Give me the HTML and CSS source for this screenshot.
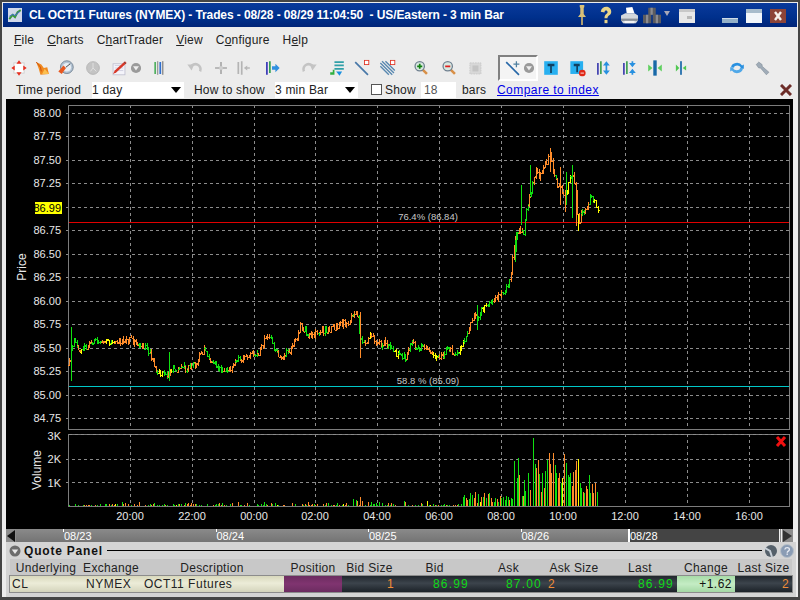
FILE: index.html
```html
<!DOCTYPE html>
<html lang="en">
<head>
<meta charset="utf-8">
<title>CL OCT11 Futures</title>
<link rel="stylesheet" href="styles.css">
</head>
<body>
<div class="window">
  <header class="titlebar">
    <svg class="app-icon" width="14" height="14" viewBox="0 0 22 20" preserveAspectRatio="none"><rect x="0" y="0" width="22" height="20" fill="#d0d8ea"/><path d="M2 16l5-6 4 3 4-7 5-3" fill="none" stroke="#3a9a3a" stroke-width="3"/><path d="M2 12l6-3 3 2 7-6" fill="none" stroke="#4070c0" stroke-width="1.500"/></svg>
    <span class="title-text">CL OCT11 Futures (NYMEX) - Trades - 08/28 - 08/29 11:04:50&nbsp; - US/Eastern - 3 min Bar</span>
    <div class="title-tools">
      <svg class="t-pin" width="8" height="22" viewBox="0 0 14 22" preserveAspectRatio="none"><path d="M3 1h8v2l-1 1v6l4 3H0l4-3V4L3 3z" fill="#d8c078"/><rect x="5.500" y="13" width="3" height="8" fill="#c8b070"/></svg>
      <svg class="t-help" width="12" height="18" viewBox="0 0 16 22" preserveAspectRatio="none"><path d="M1 7c1-8 14-8 14 0 0 5-5 4-5 8H6c0-6 5-5 4-8-.5-2-4-2-4 1z" fill="#e8d488"/><rect x="6" y="17" width="4" height="4" fill="#e8d488"/></svg>
      <svg class="t-print" width="17" height="17" viewBox="0 0 24 22" preserveAspectRatio="none"><path d="M7 1l9-1 3 8H8z" fill="#fff"/><path d="M0 11l6-3h13l5 3v6l-3 4H3l-3-4z" fill="#d4d8dc"/><rect x="0" y="15" width="24" height="3" fill="#8a9098"/><rect x="5" y="18" width="14" height="3" fill="#f4f4f4"/></svg>
      <svg class="t-cube" width="18" height="17" viewBox="0 0 24 22" preserveAspectRatio="none"><path d="M7 1h10v9H7zM0 10h11v11H0zM13 10h11v11H13z" fill="#5c5c60"/><path d="M10 1h3v9h-3zM4 10h3v11H4zM17 10h3v11h-3z" fill="#8c8c90"/></svg>
      <svg class="t-arrow" width="8" height="22" viewBox="0 0 8 22"><path d="M1 7h6l-3 5z" fill="#a8a8b8"/></svg>
      <svg class="t-win" width="16" height="22" viewBox="0 0 16 22"><rect y="5" width="16" height="14" fill="#e8e8e8"/><rect y="5" width="16" height="3" fill="#c8c8c8"/><rect x="8" y="12" width="5" height="3" fill="#b8b8b8"/></svg>
      <svg class="t-min" width="17" height="22" viewBox="0 0 17 22"><rect y="14" width="16" height="5" fill="#94b0c8"/><rect y="14" width="16" height="1" fill="#d0dce8"/></svg>
      <svg class="t-max" width="17" height="22" viewBox="0 0 17 22"><rect y="5" width="16" height="14" fill="#f2f6fa"/><rect y="5" width="16" height="4" fill="#a8bccc"/></svg>
      <svg class="t-close" width="17" height="22" viewBox="0 0 17 22"><rect y="5" width="16" height="14" fill="#8c4438"/><path d="M5 8l6 8M11 8l-6 8" stroke="#f4f0ec" stroke-width="2.400"/></svg>
    </div>
  </header>

  <nav class="menubar">
    <span class="menu-item"><u>F</u>ile</span>
    <span class="menu-item"><u>C</u>harts</span>
    <span class="menu-item">C<u>h</u>artTrader</span>
    <span class="menu-item"><u>V</u>iew</span>
    <span class="menu-item">C<u>o</u>nfigure</span>
    <span class="menu-item">H<u>e</u>lp</span>
  </nav>

  <div class="toolbar">
    <svg class="ic" viewBox="0 0 20 20"><rect x="4" y="4" width="12" height="12" fill="#fff" stroke="#ccc"/><path d="M10 1l3 4H7zM10 19l-3-4h6zM1 10l4-3v6zM19 10l-4 3V7z" fill="#e83020"/></svg>
    <svg class="ic g4" viewBox="0 0 20 20"><path d="M2 3l6 3 3 4 4-1 2 8-10 1-2-7z" fill="#f08a20"/><path d="M2 3l5 6 1 5" stroke="#c84808" fill="none"/><path d="M12 11l5 6H9z" fill="#fbc050"/></svg>
    <svg class="ic g3" viewBox="0 0 20 20"><circle cx="11" cy="9" r="7.500" fill="#b4c4d4" stroke="#6c7c8c"/><circle cx="11" cy="9" r="5" fill="#e8eef4"/><path d="M1 14l6-7 3 3-5 7z" fill="#e85820"/><path d="M10 9l5-4" stroke="#333"/></svg>
    <svg class="ic g7" viewBox="0 0 20 20"><circle cx="10" cy="10" r="7.500" fill="#c4c4c4" stroke="#b4b4b4"/><path d="M10 4v6l4 4M10 10l-3 4" stroke="#e4e4e4" fill="none"/></svg>
    <svg class="ic g6" viewBox="0 0 20 20"><rect x="3" y="5" width="14" height="13" fill="#f4f4fa" stroke="#c0c0d0"/><path d="M5 7h10M5 10h10M5 13h10" stroke="#ccd" /><path d="M17 2l2 2L7 15l-4 2 2-4z" fill="#d83828"/><path d="M16 3l2 2" stroke="#505050"/></svg>
    <svg class="dd g1" viewBox="0 0 12 20"><circle cx="6" cy="10" r="6" fill="#9a9a9a"/><path d="M2.500 8h7L6 13z" fill="#eee"/></svg>
    <svg class="ic g7" viewBox="0 0 20 20"><path d="M5.500 3v14" stroke="#50b060" stroke-width="2"/><path d="M8.500 2v16" stroke="#707070"/><path d="M11.500 3v14" stroke="#3070d0" stroke-width="2"/><path d="M14.500 2v16" stroke="#505050"/></svg>
    <svg class="ic g16" viewBox="0 0 20 20"><path d="M16 14A6 6 0 0 0 5 9" fill="none" stroke="#c4c4c4" stroke-width="3"/><path d="M1 6l8 0-3 7z" fill="#c4c4c4"/></svg>
    <svg class="ic g6" viewBox="0 0 20 20"><path d="M10 3v14M3 10h14" stroke="#a8a8a8" stroke-width="2"/><path d="M8 8h4v4H8z" fill="#d0d0d0"/></svg>
    <svg class="ic g2" viewBox="0 0 20 20"><path d="M4.500 3v14M8.500 2v16" stroke="#b4b4b4" stroke-width="2"/><path d="M11 10l4-3v2h3v2h-3v2z" fill="#b8b8b8"/></svg>
    <svg class="ic g9" viewBox="0 0 20 20"><path d="M4 3v15" stroke="#3838b8" stroke-width="2"/><path d="M7.500 2v14" stroke="#30a050" stroke-width="2"/><path d="M10 8h4V5l5 5-5 5v-3h-4z" fill="#3090e0"/></svg>
    <svg class="ic g17" viewBox="0 0 20 20"><path d="M4 14A6 6 0 0 1 15 9" fill="none" stroke="#c4c4c4" stroke-width="3"/><path d="M19 6l-8 0 3 7z" fill="#c4c4c4"/></svg>
    <svg class="ic g8" viewBox="0 0 20 20"><path d="M7 2h11v2H7zM7 6h11v2H7zM7 10h11v2H7z" fill="#30a0a8"/><path d="M2 18v-3h3v-3h2v6z" fill="#30b040"/><path d="M9 14h7l-3 5z" fill="#1890e0"/></svg>
    <svg class="ic g5" viewBox="0 0 20 20"><path d="M2 3l15 15" stroke="#4878a8" stroke-width="2"/><rect x="13" y="1" width="5" height="5" fill="#fff" stroke="#e03020"/></svg>
    <svg class="ic g6" viewBox="0 0 20 20"><path d="M1 4l14 14M3 2l14 14M1 8l10 10M7 2l11 11" stroke="#5888b0" stroke-width="1.600"/><rect x="13" y="1" width="5" height="5" fill="#fff" stroke="#e03020"/></svg>
    <svg class="ic g13" viewBox="0 0 20 20"><use href="#lens"/><path d="M5.500 8h6M8.500 5v6" stroke="#108010" stroke-width="2"/></svg>
    <svg class="ic g8" viewBox="0 0 20 20"><use href="#lens"/><path d="M5.500 8h6" stroke="#e02020" stroke-width="2"/></svg>
    <svg class="ic g6" viewBox="0 0 20 20"><rect x="4" y="4" width="13" height="13" fill="#d8d8d8" stroke="#c8c8c8" stroke-dasharray="2 1"/><rect x="7" y="7" width="7" height="7" fill="#c4c4c4"/></svg>
    <div class="tool-box g13">
      <svg class="ic" viewBox="0 0 20 20"><path d="M2 3l15 15" stroke="#2868a8" stroke-width="2"/><path d="M14 2v7M10.500 5.500h7" stroke="#5080a0" stroke-width="1.500"/></svg>
      <svg class="dd" viewBox="0 0 12 20"><circle cx="6" cy="10" r="6" fill="#9a9a9a"/><path d="M2.500 8h7L6 13z" fill="#eee"/></svg>
    </div>
    <svg class="ic g3" viewBox="0 0 20 20"><rect x="2" y="2" width="16" height="16" fill="#28b0f0"/><path d="M6 5h8v3h-3v8H9V8H6z" fill="#104060"/></svg>
    <svg class="ic g7" viewBox="0 0 20 20"><rect x="1" y="2" width="15" height="15" fill="#28b0f0"/><path d="M5 5h7v3h-2v7H8V8H5z" fill="#104060"/><circle cx="15" cy="16" r="4" fill="#e02818"/><path d="M13 16h4" stroke="#fff"/></svg>
    <svg class="ic g5" viewBox="0 0 20 20"><path d="M4 4v14" stroke="#4040b0" stroke-width="2"/><path d="M7.500 2v15" stroke="#40a050" stroke-width="2"/><path d="M14 2l4 5h-3v6h3l-4 5-4-5h3V7h-3z" fill="#2890e0"/></svg>
    <svg class="ic g6" viewBox="0 0 20 20"><path d="M4 4v14" stroke="#4040b0" stroke-width="2"/><path d="M7.500 2v15" stroke="#40a050" stroke-width="2"/><path d="M14 9l-4-5h3V2h2v2h3zM14 11l4 5h-3v2h-2v-2h-3z" fill="#2890e0"/></svg>
    <svg class="ic g6" viewBox="0 0 20 20"><rect x="8" y="1" width="4" height="18" fill="#1868a8"/><path d="M7 10l-5-4v8z" fill="#60d060"/><path d="M13 10l5-4v8z" fill="#60d060"/></svg>
    <svg class="ic g6" viewBox="0 0 20 20"><rect x="9" y="2" width="2" height="16" fill="#1868a8"/><path d="M8 10L4 6v8z" fill="#50c850"/><path d="M12 10l4-3v6z" fill="#50c850"/></svg>
    <svg class="ic g36" viewBox="0 0 20 20"><path d="M3 9a7 6 0 0 1 13-2l2-1v5h-5l1.500-2A5 4 0 0 0 6 9z" fill="#2890e0"/><path d="M17 11a7 6 0 0 1-13 2l-2 1v-5h5l-1.500 2a5 4 0 0 0 8.500-.5z" fill="#50a8e8"/></svg>
    <svg class="ic g6" viewBox="0 0 20 20"><path d="M2 6l3-3 4 3 0 2 8 7-3 3-7-8-2 0z" fill="#a0acb8" stroke="#788490" stroke-width=".6"/></svg>
  </div>

  <div class="options">
    <span class="opt-label lbl-time">Time period</span>
    <div class="combo combo-a"><span>1 day</span><i class="caret"></i></div>
    <span class="opt-label lbl-how">How to show</span>
    <div class="combo combo-b"><span>3 min Bar</span><i class="caret"></i></div>
    <i class="checkbox"></i>
    <span class="opt-label lbl-show">Show</span>
    <div class="num-input">18</div>
    <span class="opt-label lbl-bars">bars</span>
    <a class="compare" href="#">Compare to index</a>
    <svg class="opt-x" width="12" height="12" viewBox="0 0 12 12"><path d="M1 1l10 10M11 1L1 11" stroke="#6c2c28" stroke-width="3"/></svg>
  </div>

  <svg id="chart" class="chart" viewBox="6 99 787 430" width="787" height="430" xmlns="http://www.w3.org/2000/svg"></svg>

  <div class="timeline">
    <div class="tl-arrow"><i class="tri-left"></i></div>
    <div class="tl-past">
      <span class="tl-date">08/23</span>
      <span class="tl-date">08/24</span>
      <span class="tl-date">08/25</span>
      <span class="tl-date">08/26</span>
    </div>
    <div class="tl-range"><span>08/28</span></div>
    <div class="tl-end"><i class="tri-right"></i></div>
  </div>

  <section class="quote">
    <div class="quote-head">
      <svg width="12" height="12" viewBox="0 0 12 12"><circle cx="6" cy="6" r="5.500" fill="#6c6c6c"/><path d="M2.800 4.500h6.400L6 9z" fill="#e8e8e8"/></svg>
      <b>Quote Panel</b>
      <i class="rule"></i>
      <svg class="q-wrench" width="14" height="14" viewBox="0 0 14 14"><circle cx="7" cy="7" r="6" fill="#55606a"/><path d="M1 4l5 3 2 6" stroke="#c8d0d8" stroke-width="2" fill="none"/></svg>
      <svg class="q-help" width="14" height="14" viewBox="0 0 14 14"><circle cx="7" cy="7" r="6.500" fill="#8a9cb4" stroke="#b8c0c8"/><path d="M4.800 5.500c.4-2.500 4.600-2.500 4.600 0 0 1.800-2.200 1.500-2.200 3.200" fill="none" stroke="#e8ecf4" stroke-width="1.300"/><rect x="6.500" y="9.500" width="1.400" height="1.400" fill="#e8ecf4"/></svg>
    </div>
    <div class="qgrid qhead">
      <span>Underlying</span><span>Exchange</span><span>Description</span><span>Position</span><span>Bid Size</span><span>Bid</span><span>Ask</span><span>Ask Size</span><span>Last</span><span>Change</span><span>Last Size</span>
    </div>
    <div class="qgrid qrow">
      <span class="c-beige c-cl">CL</span>
      <span class="c-beige c-ex">NYMEX</span>
      <span class="c-beige c-desc">OCT11 Futures</span>
      <span class="c-pos"></span>
      <span class="c-dark c-right c-orange">1</span>
      <span class="c-dark c-right c-green">86.99</span>
      <span class="c-dark c-right c-green c-ask">87.00</span>
      <span class="c-dark c-orange c-asksize">2</span>
      <span class="c-dark c-right c-green">86.99</span>
      <span class="c-change c-right">+1.62</span>
      <span class="c-dark c-right c-orange">2</span>
    </div>
  </section>
</div>

<svg class="defs" width="0" height="0"><defs><g id="lens"><path d="M11 11l6 6" stroke="#d89048" stroke-width="3"/><circle cx="8.500" cy="8" r="5.500" fill="#d8e8e0" stroke="#708090" stroke-width="1.500"/></g></defs></svg>
<script src="script.js"></script>
</body>
</html>
```
FILE: styles.css
```css
* { box-sizing: border-box; }
html, body { margin: 0; padding: 0; }
body { width: 800px; height: 600px; overflow: hidden; background: #444; font-family: "Liberation Sans", Arial, sans-serif; font-size: 12px; }
svg { display: block; flex: none; }
.defs { position: absolute; }

.window { width: 800px; height: 600px; border: 2px solid #454545; border-bottom-width: 3px; padding: 1px 1px 0; background: #ececec; display: flex; flex-direction: column; }

.titlebar { height: 24px; flex: none; display: flex; align-items: center; color: #fff; background: linear-gradient(#0a3a9c, #00308c 60%, #002478); }
.app-icon { margin-left: 5px; }
.title-text { margin-left: 7px; font-weight: bold; font-size: 12px; letter-spacing: -.1px; white-space: pre; }
.title-tools { margin-left: auto; display: flex; align-items: center; padding-right: 10px; }
.t-help { margin-left: 14px; }
.t-print { margin-left: 9px; }
.t-cube { margin-left: 5px; }
.t-arrow { margin-left: 2px; }
.t-win { margin-left: 8px; }
.t-min { margin-left: 27px; }
.t-max { margin-left: 7px; }
.t-close { margin-left: 7px; }

.menubar { height: 25px; flex: none; display: flex; align-items: center; padding-left: 11px; gap: 13px; color: #222; letter-spacing: .2px; }
.menu-item { display: block; }

.toolbar { height: 28px; flex: none; display: flex; align-items: center; padding: 4px 0 0 6px; }
.ic { width: 20px; height: 20px; transform: scale(.85); }
.dd { width: 12px; height: 20px; transform: scale(.85); }
.tool-box { width: 40px; height: 26px; flex: none; display: flex; align-items: center; padding-left: 3px; background: #f4f4f4; border: 2px solid; border-color: #808080 #fff #fff #808080; }
.g1 { margin-left: 1px; } .g2 { margin-left: 2px; } .g3 { margin-left: 3px; } .g4 { margin-left: 4px; }
.g5 { margin-left: 5px; } .g6 { margin-left: 6px; } .g7 { margin-left: 7px; } .g8 { margin-left: 8px; }
.g9 { margin-left: 9px; } .g13 { margin-left: 13px; } .g16 { margin-left: 16px; } .g17 { margin-left: 17px; }
.g36 { margin-left: 36px; }

.options { height: 19px; flex: none; display: flex; align-items: center; color: #222; letter-spacing: .2px; }
.opt-label { white-space: nowrap; flex: none; }
.lbl-time { margin-left: 13px; width: 76px; }
.combo { height: 16px; flex: none; background: #fff; display: flex; align-items: center; justify-content: space-between; padding: 0 2px 0 0; }
.combo span { white-space: nowrap; }
.combo-a { width: 92px; }
.lbl-how { margin-left: 10px; width: 81px; }
.combo-b { width: 83px; }
.caret { width: 0; height: 0; border: 5px solid transparent; border-top: 6px solid #000; border-bottom: 0; margin-right: 1px; }
.checkbox { width: 11px; height: 11px; flex: none; margin-left: 13px; background: #fff; border: 1px solid #555; }
.lbl-show { margin-left: 3px; width: 36px; }
.num-input { width: 35px; height: 16px; flex: none; line-height: 16px; background: #fff; padding-left: 3px; color: #555; }
.lbl-bars { margin-left: 6px; width: 35px; }
.compare { color: #0000e8; white-space: nowrap; letter-spacing: .45px; }
.opt-x { margin-left: auto; margin-right: 5px; }

.chart { margin-left: 3px; background: #000; flex: none; }
.chart text { font-family: "Liberation Sans", Arial, sans-serif; }

.timeline { height: 13px; flex: none; margin-left: 3px; width: 787px; display: flex; color: #fff; font-size: 11px; line-height: 14px; background: #808080; overflow: hidden; }
.tl-arrow { width: 10px; flex: none; background: #8c8c8c; display: flex; align-items: center; padding-left: 1px; }
.tri-left { width: 0; height: 0; border: 6px solid transparent; border-right: 8px solid #111; border-left: 0; }
.tl-past { width: 612px; flex: none; padding-left: 47px; display: flex; background: linear-gradient(#8a8a8a, #747474); }
.tl-date { width: 152.5px; flex: none; padding-left: 1px; position: relative; }
.tl-date:last-child { width: 107px; }
.tl-date::before { content: ""; position: absolute; left: 0; top: 0; width: 1px; height: 3px; background: #fff; }
.tl-range { width: 151px; flex: none; background: #444; border-left: 2px solid #fff; }
.tl-end { width: 14px; flex: none; background: #8c8c8c; border-left: 3px double #eee; display: flex; align-items: center; padding-left: 1px; }
.tri-right { width: 0; height: 0; border: 6px solid transparent; border-left: 9px solid #333; border-right: 0; }

.quote { height: 55px; flex: none; margin-left: 3px; width: 790px; background: #d4d4d4; padding-bottom: 3px; }
.quote-head { height: 17px; display: flex; align-items: center; padding-left: 3px; }
.quote-head b { margin-left: 3px; letter-spacing: .8px; font-size: 12px; color: #111; }
.rule { flex: 1; height: 1px; background: #000; margin: 0 2px 0 4px; }
.q-help { margin: 0 2px 0 2px; }
.qgrid { display: grid; width: 782px; margin-left: 4px; grid-template-columns: 72px 58px 144px 58px 55px 75px 73px 58px 74px 58px 57px; letter-spacing: .3px; }
.qgrid span { display: block; white-space: nowrap; }
.qhead { height: 17px; line-height: 18px; background: #c8c8c8; text-align: center; color: #222; }
.qrow { height: 16px; line-height: 16px; background: #333; font-size: 12px; outline: 1px solid #8c8c8c; }
.c-beige { background: linear-gradient(#d8d8bc, #ececd8 45%, #d4d4bc); color: #222; letter-spacing: .5px; }
.c-cl { padding-left: 2px; }
.c-ex { padding-left: 4px; }
.c-desc { padding-left: 4px; }
.c-pos { background: linear-gradient(#6c2c60, #803470 50%, #6c2c60); }
.c-dark { background: linear-gradient(#20262c, #3c444c 45%, #1c2228); }
.c-right { text-align: right; padding-right: 3px; }
.c-orange { color: #f08c38; }
.c-green { color: #10d818; letter-spacing: 1.200px; }
.c-asksize { padding-left: 3px; }
.c-change { background: linear-gradient(#a8dca8, #c4ecc4 50%, #a4d8a4); color: #111; letter-spacing: .5px; }
```
FILE: script.js
```js
(function () {
  var NS = 'http://www.w3.org/2000/svg';
  var svg = document.getElementById('chart');
  function el(name, attrs, text) {
    var e = document.createElementNS(NS, name);
    for (var k in attrs) e.setAttribute(k, attrs[k]);
    if (text !== undefined) e.textContent = text;
    svg.appendChild(e);
    return e;
  }
  function path(d, stroke, extra) {
    var a = { d: d, stroke: stroke, fill: 'none', 'shape-rendering': 'crispEdges' };
    for (var k in extra) a[k] = extra[k];
    return el('path', a);
  }
  function label(x, y, s, anchor, fill, size) {
    return el('text', { x: x, y: y, fill: fill || '#e8e8e8', 'font-size': size || 11, 'text-anchor': anchor || 'middle' }, s);
  }

  // Grid
  var L = 68, R = 789, dash = { 'stroke-dasharray': '3 3' };
  var d = '', x;
  var gx = [130, 192, 254, 315, 377, 439, 501, 563, 625, 687, 749];
  gx.forEach(function (v) { d += 'M' + (v + .5) + ' 105V429M' + (v + .5) + ' 434V506'; });
  var prices = ['88.00', '87.75', '87.50', '87.25', '87.00', '86.75', '86.50', '86.25', '86.00', '85.75', '85.50', '85.25', '85.00', '84.75'];
  prices.forEach(function (p, n) {
    var py = Math.round(113 + n * 23.46);
    d += 'M66 ' + (py + .5) + 'H' + R;
    if (p !== '87.00') label(61, py + 4, p, 'end');
  });
  [459, 482].forEach(function (v) { d += 'M66 ' + (v + .5) + 'H' + R; });
  path(d, '#8c8c8c', dash);
  path('M' + (L + .5) + ' 105.500H' + (R + .5) + 'V429.500H' + (L + .5) + 'ZM' + (L + .5) + ' 434.500H' + (R + .5) + 'V506.500H' + (L + .5) + 'Z', '#7c7c7c');
  path('M' + (L + .5) + ' 434.500H' + (R + .5), '#8c8c8c', dash);

  gx.forEach(function (v, n) {
    var t = ['20:00', '22:00', '00:00', '02:00', '04:00', '06:00', '08:00', '10:00', '12:00', '14:00', '16:00'][n];
    label(v, 520, t);
  });
  label(61, 440, '3K', 'end');
  label(61, 463, '2K', 'end');
  label(61, 487, '1K', 'end');

  el('rect', { x: 35, y: 202, width: 27, height: 12, fill: '#ffff00' });
  label(61, 212, '86.99', 'end', '#000');
  el('text', { transform: 'translate(26 267) rotate(-90)', fill: '#e8e8e8', 'font-size': 12, 'text-anchor': 'middle' }, 'Price');
  el('text', { transform: 'translate(41 470) rotate(-90)', fill: '#e8e8e8', 'font-size': 12, 'text-anchor': 'middle' }, 'Volume');

  // Fibonacci lines
  path('M69 222.500H789', '#e00000');
  path('M69 386.500H789', '#00c8c8');
  label(428, 220, '76.4% (86.84)', 'middle', '#c8c8c8', 9.5);
  label(428, 384, '58.8 % (85.09)', 'middle', '#c8c8c8', 9.5);

  // Repeatable pseudo random series
  var seed = 4711;
  function rnd() { seed = (seed * 16807) % 2147483647; return seed / 2147483647; }
  for (var w = 0; w < 20; w++) rnd();

  var keys = [[68,365],[70,352],[74,340],[79,348],[85,346],[92,342],[100,340],[110,342],[118,340],[130,340],[136,344],[140,348],[144,345],[150,354],[155,368],[160,372],[165,375],[172,368],[178,370],[186,368],[195,365],[200,355],[204,348],[210,362],[218,368],[224,372],[232,366],[240,358],[246,355],[258,354],[262,345],[266,337],[272,342],[278,357],[284,354],[290,348],[296,342],[300,324],[304,330],[310,337],[320,332],[330,328],[340,325],[350,320],[355,311],[358,320],[360,340],[365,343],[370,333],[375,343],[385,343],[392,352],[400,355],[405,358],[410,343],[420,348],[430,350],[438,358],[446,350],[458,353],[463,340],[473,320],[480,312],[487,303],[495,298],[505,290],[510,280],[513,250],[515,241],[518,227],[523,232],[528,200],[532,187],[535,167],[538,177],[543,167],[547,162],[550,153],[553,173],[557,187],[560,183],[563,198],[567,190],[570,177],[573,173],[576,197],[578,223],[582,210],[587,208],[590,197],[593,198],[597,210]];
  function centre(px) {
    for (var j = 1; j < keys.length; j++) {
      if (px <= keys[j][0]) {
        var a = keys[j - 1], b = keys[j];
        return a[1] + (b[1] - a[1]) * (px - a[0]) / (b[0] - a[0]);
      }
    }
    return keys[keys.length - 1][1];
  }

  // Each bar is drawn in turn so colours overlap as in a real bar chart.
  // The pen colour runs in short streaks of up, down and unchanged bars.
  var prev = centre(68), streak = 0, colour = '#10e010';
  for (var fx = 69; fx < 598; fx += 1.55) {
    x = Math.round(fx);
    var c = centre(fx), close = c + (rnd() - .5) * 7;
    var open = prev + (rnd() - .5) * 1.5;
    var hi = Math.min(open, close) - rnd() * 3, lo = Math.max(open, close) + rnd() * 3;
    var s = 'M' + (x + .5) + ' ' + Math.round(hi) + 'V' + Math.round(lo) +
      'M' + (x - 1) + ' ' + (Math.round(open) + .5) + 'h2M' + (x + 1) + ' ' + (Math.round(close) + .5) + 'h1';
    if (streak-- <= 0) {
      var r = rnd();
      colour = r < .08 ? '#ffff00' : r < .56 ? '#ff8c2a' : '#10e010';
      streak = Math.floor(rnd() * 3);
    }
    path(s, colour);
    prev = close;
  }
  // Long individual bars
  path('M71.500 327V381M169.500 352V381M477.500 305V330M516.500 232V252M515.500 240V262M521.500 185V225M530.500 165V195M572.500 165V218M566.500 172V205', '#10e010');
  path('M360.500 312V358M550.500 148V172M560.500 167V205M565.500 190V212M576.500 190V226', '#ff8c2a');
  path('M578.500 214V231', '#ffff00');

  // Volume
  var vg = '', vo = '', vy = '';
  function vbar(vx, h, col) {
    var part = 'M' + (Math.round(vx) + .5) + ' 506V' + Math.round(506 - h);
    if (col === 'g') vg += part; else if (col === 'o') vo += part; else vy += part;
  }
  for (var bx = 69; bx < 514; bx += 1.55) {
    var base;
    if (bx < 350) base = .5 + rnd() * rnd() * 4;
    else if (bx < 362) base = 1 + rnd() * 9;
    else if (bx < 460) base = .5 + rnd() * rnd() * 6;
    else if (bx < 490) base = 1 + rnd() * 14;
    else base = 1 + rnd() * 9;
    if (rnd() < .3 && bx < 460) continue;
    var t = rnd();
    vbar(bx, base, t < .55 ? 'g' : t < .93 ? 'o' : 'y');
  }
  var big = [[103,125,'g'],[110,175,'g'],[115,115,'g'],[118,168,'o'],[125,230,'g'],[128,230,'o'],[133,183,'g'],[136,215,'g'],[143,175,'g'],[145,160,'g'],[151,213,'o'],[158,141,'g'],[160,55,'g'],[166,133,'g'],[169,145,'o'],[175,123,'o'],[178,165,'g'],[184,218,'o'],[187,162,'g'],[193,205,'o'],[196,155,'g'],[202,123,'g'],[208,102,'o'],[211,133,'o'],[214,160,'o'],[220,102,'o'],[226,138,'g'],[229,160,'g'],[235,175,'o'],[238,160,'o'],[244,190,'g'],[247,175,'y'],[253,105,'o'],[259,130,'g'],[263,168,'g'],[268,172,'g'],[271,160,'g'],[277,200,'o'],[280,157,'o'],[286,153,'o'],[289,125,'o'],[295,120,'y'],[301,192,'g'],[304,205,'g'],[310,217,'o'],[313,220,'g'],[319,200,'o'],[322,210,'o'],[328,168,'g'],[331,220,'g'],[337,195,'o'],[340,222,'o'],[346,192,'o'],[352,217,'g']];
  big.forEach(function (b) { vbar(480 + b[0] / 3, (260 - b[1]) / 3, b[2]); });
  path(vo, '#ff8c2a');
  path(vg, '#10e010');
  path(vy, '#ffff00');

  // Close marker for the volume pane
  el('path', { d: 'M777 437l8 9M785 437l-8 9', stroke: '#f01010', 'stroke-width': 3, fill: 'none' });
})();
```
